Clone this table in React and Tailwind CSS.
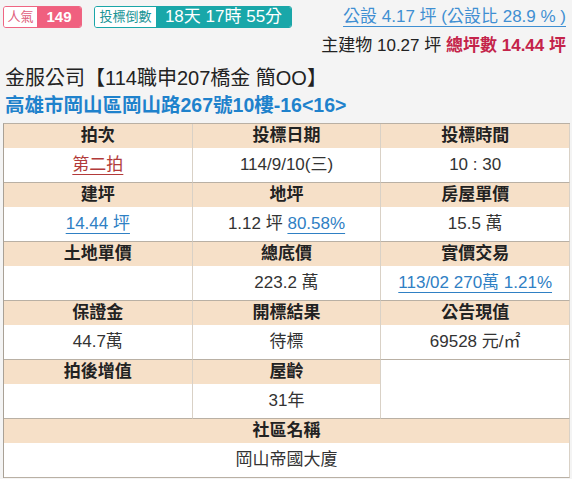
const cells = [
  { label: "拍次", value: <span className="text-[#b23a3a] underline underline-offset-4 decoration-1">第二拍</span> },
  { label: "投標日期", value: "114/9/10(三)" },
  { label: "投標時間", value: "10 : 30" },
  { label: "建坪", value: <span className="text-[#2f80c4] underline underline-offset-4 decoration-1">14.44 坪</span> },
  {
    label: "地坪",
    value: (
      <>
        1.12 坪 <span className="text-[#2f80c4] underline underline-offset-4 decoration-1">80.58%</span>
      </>
    ),
  },
  { label: "房屋單價", value: "15.5 萬" },
  { label: "土地單價", value: "" },
  { label: "總底價", value: "223.2 萬" },
  { label: "實價交易", value: <span className="text-[#2f80c4] underline underline-offset-4 decoration-1">113/02 270萬 1.21%</span> },
  { label: "保證金", value: "44.7萬" },
  { label: "開標結果", value: "待標" },
  { label: "公告現值", value: "69528 元/㎡" },
  { label: "拍後增值", value: "" },
  { label: "屋齡", value: "31年" },
  { label: null, value: null },
];

const Cell = ({ label, value, wide }) => (
  <div
    className={`border-r border-b border-r-[#d9d1c6] border-b-[#b9b0a4] bg-white ${
      wide ? "col-span-3" : ""
    }`}
  >
    {label !== null && (
      <>
        <div className="h-[24px] bg-[#f6e0c8] text-center font-bold text-[17px] leading-[24px] text-[#222]">
          {label}
        </div>
        <div className="h-[34px] text-center text-[17px] leading-[34px] text-[#333]">
          {value}
        </div>
      </>
    )}
  </div>
);

export default function App() {
  return (
    <div className="min-h-[479px] bg-[#f4f4f4] pl-[3px] pr-[2px] font-['Liberation_Sans','Noto_Sans_CJK_TC',sans-serif]">
      <div className="flex items-start justify-between pt-[6px] pr-[4px]">
        <div className="flex items-center gap-[12px]">
          <div className="flex h-[22px] overflow-hidden rounded-[3px] border border-[#ef6582]">
            <span className="w-[33px] bg-white text-center text-[13px] leading-[20px] text-[#e0607c]">
              人氣
            </span>
            <span className="w-[44px] bg-[#f0607f] text-center text-[15px] font-bold leading-[20px] text-white">
              149
            </span>
          </div>
          <div className="flex h-[22px] overflow-hidden rounded-[3px] border border-[#1aa6a8]">
            <span className="w-[61px] bg-white text-center text-[13px] leading-[20px] text-[#1a9496]">
              投標倒數
            </span>
            <span className="w-[135px] bg-[#19a7a9] text-center text-[17px] leading-[20px] text-white">
              18天 17時 55分
            </span>
          </div>
        </div>
        <span className="text-[17px] leading-[22px] text-[#3f8fd2] underline decoration-1 underline-offset-4">
          公設 4.17 坪 (公設比 28.9 % )
        </span>
      </div>
      <div className="mt-[7px] pr-[4px] text-right text-[17px] leading-[22px] text-[#222]">
        主建物 10.27 坪{" "}
        <span className="font-bold text-[#c4244a]">總坪數 14.44 坪</span>
      </div>

      <h1 className="mt-[8px] pl-[2px] text-[20px] leading-[26px] text-[#222]">
        金服公司【114職申207橋金 簡OO】
      </h1>
      <h2 className="mt-[1px] pl-[2px] text-[19.5px] font-bold leading-[26px] text-[#1f82cc]">
        高雄市岡山區岡山路267號10樓-16&lt;16&gt;
      </h2>

      <div className="mt-[5px] grid w-[567px] grid-cols-3 border-t border-l border-t-[#b9b0a4] border-l-[#a9a196]">
        {cells.map((c, idx) => (
          <Cell key={idx} label={c.label} value={c.value} />
        ))}
        <Cell label="社區名稱" value="岡山帝國大廈" wide />
      </div>
    </div>
  );
}
